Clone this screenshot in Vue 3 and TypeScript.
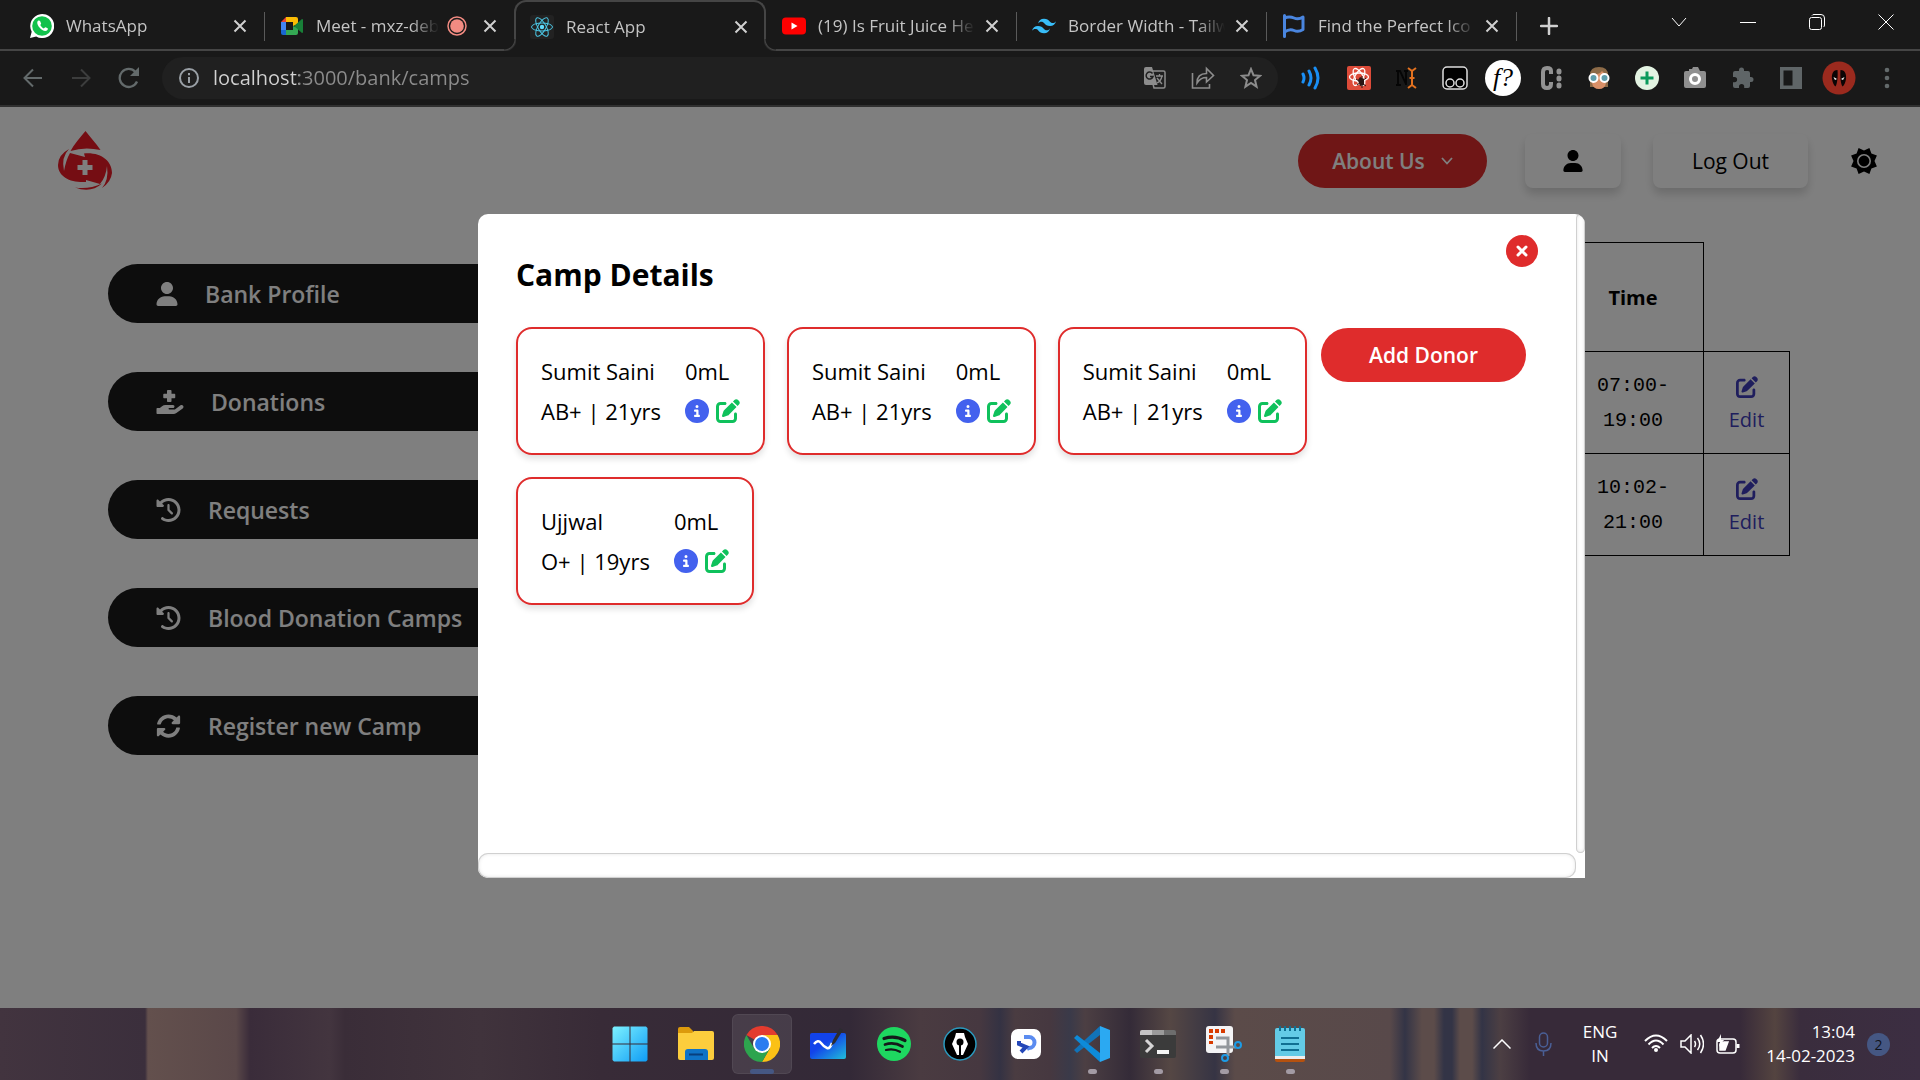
<script setup lang="ts">
interface Tab {
  title: string
  icon: string
  active?: boolean
  recording?: boolean
  divider?: boolean
}
interface Glyph {
  box: string
  width: number
  path: string
}
interface NavItem {
  label: string
  glyph: Glyph
}
interface Donor {
  name: string
  group: string
  age: number
  amount: string
}

const user: Glyph = {
  box: '0 0 448 512',
  width: 22,
  path: 'M224 256c70.7 0 128-57.3 128-128S294.7 0 224 0C153.3 0 96 57.3 96 128S153.3 256 224 256zM274.7 304H173.3C77.6 304 0 381.6 0 477.3c0 19.1 15.5 34.7 34.7 34.7h378.7C432.500 512 448 496.500 448 477.300C448 381.600 370.400 304 274.700 304z',
}
const hand: Glyph = {
  box: '0 0 576 512',
  width: 28,
  path: 'M568.2 336.3c-13.1-17.8-38.1-21.7-55.9-8.5l-119.7 88.2h-120.6c-8.7 0-16-7.2-16-16s7.2-16 16-16h78.2c16 0 30.7-10.9 33.4-26.6c3.2-20-12.1-37.4-31.6-37.4H192c-27 0-53.1 9.2-74.1 26.2L71.4 384H16c-8.7 0-16 7.3-16 16v96c0 8.800 7.300 16 16 16h346.100c22 0 43.900-7.200 61.700-20.300l135.100-99.500C577.500 379.100 581.300 354.100 568.200 336.300zM160 176h64v64c0 8.800 7.200 16 16 16h64c8.800 0 16-7.200 16-16v-64h64c8.800 0 16-7.200 16-16V96c0-8.800-7.200-16-16-16h-64V16c0-8.800-7.200-16-16-16h-64c-8.800 0-16 7.200-16 16v64h-64c-8.800 0-16 7.200-16 16v64C144 168.800 151.200 176 160 176z',
}
const history: Glyph = {
  box: '0 0 512 512',
  width: 25,
  path: 'M75 75L41 41C25.9 25.9 0 36.6 0 57.9V168c0 13.3 10.7 24 24 24H134.1c21.4 0 32.1-25.9 17-41l-30.8-30.8C155 85.5 203 64 256 64c106 0 192 86 192 192s-86 192-192 192c-40.8 0-78.6-12.7-109.7-34.4c-14.5-10.1-34.4-6.6-44.6 7.9s-6.6 34.4 7.9 44.6C151.2 495 201.7 512 256 512c141.4 0 256-114.6 256-256S397.4 0 256 0C185.3 0 121.3 28.7 75 75zm181 53c-13.3 0-24 10.7-24 24V256c0 6.4 2.5 12.5 7 17l72 72c9.4 9.4 24.6 9.4 33.9 0s9.4-24.6 0-33.9l-65-65V152c0-13.3-10.7-24-24-24z',
}
const sync: Glyph = {
  box: '0 0 512 512',
  width: 25,
  path: 'M370.7 133.3C339.5 104 298.9 88 255.8 88c-77.5.1-144.3 53.2-162.8 126.9-1.3 5.4-6.1 9.1-11.6 9.1H24.1c-7.5 0-13.2-6.8-11.8-14.2C33.9 94.9 134.8 8 256 8c66.4 0 126.8 26.1 171.3 68.7L463 41C478.1 25.9 504 36.6 504 57.9V192c0 13.3-10.7 24-24 24H345.900c-21.400 0-32.100-25.900-17-41l41.800-41.700zM32 296h134.100c21.400 0 32.100 25.900 17 41l-41.800 41.700c31.300 29.300 71.800 45.300 114.900 45.300 77.400-.1 144.300-53.100 162.800-126.800 1.300-5.400 6.100-9.200 11.600-9.200h57.300c7.500 0 13.200 6.800 11.800 14.200C478.100 417.100 377.200 504 256 504c-66.400 0-126.800-26.100-171.300-68.700L49 471C33.900 486.100 8 475.400 8 454.100V320c0-13.300 10.700-24 24-24z',
}
const pen =
  'M471.6 21.7c-21.9-21.9-57.3-21.9-79.2 0L362.3 51.7l97.9 97.9 30.1-30.1c21.9-21.9 21.9-57.3 0-79.2L471.6 21.7zm-299.2 220c-6.1 6.1-10.8 13.6-13.5 21.9l-29.6 88.8c-2.9 8.6-.6 18.1 5.8 24.6s15.9 8.7 24.6 5.8l88.8-29.6c8.2-2.7 15.7-7.4 21.9-13.5L437.7 172.3 339.7 74.3 172.4 241.7zM96 64C43 64 0 107 0 160V416c0 53 43 96 96 96H352c53 0 96-43 96-96V320c0-17.7-14.3-32-32-32s-32 14.3-32 32v96c0 17.7-14.3 32-32 32H96c-17.7 0-32-14.3-32-32V160c0-17.7 14.3-32 32-32h96c17.7 0 32-14.3 32-32s-14.3-32-32-32H96z'
const info =
  'M256 512A256 256 0 1 0 256 0a256 256 0 1 0 0 512zM216 336h24V272H216c-13.3 0-24-10.7-24-24s10.7-24 24-24h48c13.3 0 24 10.7 24 24v88h8c13.3 0 24 10.7 24 24s-10.7 24-24 24H216c-13.3 0-24-10.7-24-24s10.7-24 24-24zm40-208a32 32 0 1 1 0 64 32 32 0 1 1 0-64z'

const tabs: Tab[] = [
  { title: 'WhatsApp', icon: 'whatsapp', divider: true },
  { title: 'Meet - mxz-deb', icon: 'meet', recording: true },
  { title: 'React App', icon: 'react', active: true },
  { title: '(19) Is Fruit Juice He', icon: 'youtube', divider: true },
  { title: 'Border Width - Tailw', icon: 'tailwind', divider: true },
  { title: 'Find the Perfect Ico', icon: 'flag', divider: true },
]
const nav: NavItem[] = [
  { label: 'Bank Profile', glyph: user },
  { label: 'Donations', glyph: hand },
  { label: 'Requests', glyph: history },
  { label: 'Blood Donation Camps', glyph: history },
  { label: 'Register new Camp', glyph: sync },
]
const camps: [string, string][] = [
  ['07:00-', '19:00'],
  ['10:02-', '21:00'],
]
const donors: Donor[] = [
  { name: 'Sumit Saini', group: 'AB+', age: 21, amount: '0mL' },
  { name: 'Sumit Saini', group: 'AB+', age: 21, amount: '0mL' },
  { name: 'Sumit Saini', group: 'AB+', age: 21, amount: '0mL' },
  { name: 'Ujjwal', group: 'O+', age: 19, amount: '0mL' },
]
const address = 'localhost:3000/bank/camps'
</script>

<template>
  <div class="screen">
    <header class="tabs">
      <div v-for="tab in tabs" :key="tab.icon" class="tab" :class="{ active: tab.active, divider: tab.divider }">
        <svg v-if="tab.icon === 'whatsapp'" class="fav" viewBox="0 0 24 24">
          <path d="M0 24l1.7-6.2A12 12 0 1 1 6.2 22.4z" fill="#fff" />
          <circle cx="12" cy="12" r="9.8" fill="#12c24c" />
          <path d="M8.5 6.5c-2 1-1.500 4 1 7s6 4.500 8 2.500c.6-1 .4-1.500-.3-1.900l-1.700-.8c-.6-.2-.9.8-1.600 1.100-1.500-.4-3-1.900-3.600-3.400.1-.6 1-1 .8-1.600l-.9-2.200c-.3-.7-1.100-.9-1.700-.7z" fill="#fff" />
        </svg>
        <svg v-else-if="tab.icon === 'meet'" class="fav" viewBox="0 0 24 24">
          <path d="M1 8l5-5v5z" fill="#ea4335" />
          <path d="M6 3h10a2 2 0 0 1 2 2v5l-5 2V8H6z" fill="#fbbc04" />
          <path d="M1 8h5v8H1z" fill="#4285f4" />
          <path d="M1 16h5v5H3a2 2 0 0 1-2-2z" fill="#1967d2" />
          <path d="M6 16h7v-4l5 2v5a2 2 0 0 1-2 2H6z" fill="#34a853" />
          <path d="M14 12l8-7q1 0 1 1v12q0 1-1 1z" fill="#188038" />
        </svg>
        <svg v-else-if="tab.icon === 'react'" class="fav" viewBox="0 0 24 24">
          <rect width="24" height="24" rx="3" fill="#222" />
          <g fill="none" stroke="#4cc9e8" stroke-width="1">
            <ellipse cx="12" cy="12" rx="10.5" ry="4" />
            <ellipse cx="12" cy="12" rx="10.5" ry="4" transform="rotate(60 12 12)" />
            <ellipse cx="12" cy="12" rx="10.5" ry="4" transform="rotate(120 12 12)" />
          </g>
          <circle cx="12" cy="12" r="2.2" fill="#61dafb" />
        </svg>
        <svg v-else-if="tab.icon === 'youtube'" class="fav" viewBox="0 0 24 24">
          <rect y="3.5" width="24" height="17" rx="4" fill="#f00" />
          <path d="M9.5 8.5l6 3.5-6 3.5z" fill="#fff" />
        </svg>
        <svg v-else-if="tab.icon === 'tailwind'" class="fav" viewBox="0 0 24 24">
          <path d="M12 4.8c-3.2 0-5.2 1.6-6 4.8 1.2-1.6 2.6-2.2 4.2-1.8.9.2 1.6.9 2.3 1.7C13.7 10.7 15 12 18 12c3.2 0 5.2-1.6 6-4.8-1.2 1.6-2.6 2.2-4.2 1.8-.9-.2-1.6-.9-2.3-1.7C16.3 6.1 15 4.8 12 4.8zM6 12c-3.2 0-5.2 1.6-6 4.8 1.2-1.6 2.6-2.2 4.2-1.8.9.2 1.6.9 2.3 1.7 1.2 1.2 2.5 2.5 5.5 2.5 3.2 0 5.2-1.6 6-4.8-1.2 1.6-2.6 2.2-4.2 1.8-.9-.2-1.6-.9-2.3-1.7C10.3 13.3 9 12 6 12z" fill="#38bdf8" />
        </svg>
        <svg v-else class="fav" viewBox="0 0 24 24">
          <path d="M2.5 1.5v21M2.5 4q5-2 9.500 0t9-1v12.500q-4.500 3-9 1t-9.500 1.500" fill="none" stroke="#4a86e0" stroke-width="3" stroke-linecap="round" stroke-linejoin="round" />
        </svg>
        <span class="tab-title">{{ tab.title }}</span>
        <svg v-if="tab.recording" class="rec" viewBox="0 0 20 20">
          <circle cx="10" cy="10" r="9" fill="none" stroke="#f28b82" stroke-width="1.5" />
          <circle cx="10" cy="10" r="6.8" fill="#f28b82" />
        </svg>
        <button class="tab-close" aria-label="Close tab">
          <svg viewBox="0 0 14 14"><path d="M1.5 1.5l11 11M12.5 1.5l-11 11" /></svg>
        </button>
      </div>
      <button class="new-tab" aria-label="New tab">
        <svg width="18" height="18" viewBox="0 0 18 18"><path d="M9 1v16M1 9h16" stroke="#d0d0d0" stroke-width="2.5" stroke-linecap="round" /></svg>
      </button>
      <div class="window-controls">
        <button aria-label="Search tabs"><svg width="16" height="16" viewBox="0 0 16 16"><path d="M1 4l7 8 7-8" /></svg></button>
        <button aria-label="Minimize"><svg width="16" height="16" viewBox="0 0 16 16"><path d="M0 8.5h16" /></svg></button>
        <button aria-label="Restore"><svg width="16" height="16" viewBox="0 0 16 16"><rect x=".5" y="3.5" width="12" height="12" rx="2" /><path d="M3 1.500q.5-1 2-1h7q3.500 0 3.500 3.500v7q0 1.500-1 2" /></svg></button>
        <button aria-label="Close"><svg width="16" height="16" viewBox="0 0 16 16"><path d="M.5.5l15 15M15.5.5l-15 15" /></svg></button>
      </div>
    </header>

    <div class="toolbar">
      <button class="tool" aria-label="Back"><svg width="20" height="20" viewBox="0 0 20 20" fill="none" stroke="#636a6b" stroke-width="2"><path d="M19 10H2M10 1.5L1.5 10l8.5 8.5" /></svg></button>
      <button class="tool" aria-label="Forward"><svg width="20" height="20" viewBox="0 0 20 20" fill="none" stroke="#3c3d3d" stroke-width="2"><path d="M1 10h17M10 1.5l8.5 8.5-8.5 8.5" /></svg></button>
      <button class="tool" aria-label="Reload"><svg width="22" height="22" viewBox="0 0 22 22"><path d="M19 14.500A9 9 0 1 1 17.500 5" fill="none" stroke="#636a6b" stroke-width="2.300" /><path d="M21 0v9h-9z" fill="#636a6b" /></svg></button>
      <div class="address">
        <svg width="20" height="20" viewBox="0 0 20 20"><circle cx="10" cy="10" r="9" fill="none" stroke="#9aa0a6" stroke-width="2" /><path d="M10 9v6M10 5v2.2" stroke="#9aa0a6" stroke-width="2" /></svg>
        <input class="url" type="text" :value="address" aria-label="Address" />
        <button class="tool" aria-label="Translate">
          <svg width="22" height="22" viewBox="0 0 22 22"><path d="M8 4h11.5a1.5 1.5 0 0 1 1.5 1.5v14a1.5 1.5 0 0 1-1.5 1.5H10l-1-4" fill="none" stroke="#8c8c8c" stroke-width="1.5" /><path d="M2 0h6l5.5 18H2a2 2 0 0 1-2-2V2a2 2 0 0 1 2-2z" fill="#8c8c8c" /><path d="M8.5 6.5A3.5 3.5 0 1 0 9 9.5H6" fill="none" stroke="#202020" stroke-width="1.5" /><path d="M12 9h7M15.500 7v2M18 9q-1 5-5 7M13 11l5 6" stroke="#8c8c8c" stroke-width="1.300" fill="none" /></svg>
        </button>
        <button class="tool" aria-label="Share">
          <svg width="24" height="24" viewBox="0 0 24 24" fill="none" stroke="#8c8c8c" stroke-width="1.6"><path d="M1.5 7v15h17v-4" /><path d="M6 17C6 11 9 7.5 15.5 7.5V2.5l7 7-7 6.5v-4.5C11 11.5 8.5 13 6 17z" /></svg>
        </button>
        <button class="tool" aria-label="Bookmark">
          <svg width="22" height="22" viewBox="0 0 22 22"><path d="M11 2l2.500 6.200 6.500.600-5 4.300 1.600 6.600L11 16l-5.600 3.700L7 13.100 2 8.800l6.500-.6z" fill="none" stroke="#8c8c8c" stroke-width="2" /></svg>
        </button>
      </div>
      <div class="extensions">
        <button class="tool" aria-label="Audio extension"><svg width="24" height="24" viewBox="0 0 24 24" fill="none" stroke="#1a8ff5" stroke-width="3" stroke-linecap="round"><path d="M4 8q2 4 0 8M10 5q4 7 0 14M16 2q6 10 0 20" /></svg></button>
        <button class="tool" aria-label="React tools"><svg width="24" height="24" viewBox="0 0 24 24"><rect width="24" height="24" rx="2" fill="#dd4b39" /><g fill="none" stroke="#fff" stroke-width="1.3"><ellipse cx="12" cy="11" rx="9.5" ry="4" /><ellipse cx="12" cy="11" rx="9.5" ry="4" transform="rotate(60 12 11)" /><ellipse cx="12" cy="11" rx="9.5" ry="4" transform="rotate(120 12 11)" /></g><path d="M11 14l2-3 4 2v6l-4 1z" fill="#2b1512" /><path d="M9 13l10 7M10 19l9-7M15 10v12" stroke="#2b1512" stroke-width="1" /></svg></button>
        <button class="tool" aria-label="Text tool"><svg width="24" height="24" viewBox="0 0 24 24"><path d="M1 5h4l6 13M3 5v14M1 19h5M11 19V5M9 5h4" stroke="#050505" stroke-width="1.8" fill="none" /><path d="M13 2l4 3 4-3M17 5v15M13 22l4-3 4 3M14.5 12h5" fill="none" stroke="#e2711f" stroke-width="2" /></svg></button>
        <button class="tool" aria-label="Scripts"><svg width="26" height="24" viewBox="0 0 26 24"><rect x="1" y="1" width="24" height="22" rx="4" fill="#000" stroke="#ddd" stroke-width="1.5" /><circle cx="8" cy="17" r="4" fill="none" stroke="#ddd" stroke-width="1.5" /><circle cx="18" cy="17" r="4" fill="none" stroke="#ddd" stroke-width="1.5" /></svg></button>
        <button class="tool font-tool" aria-label="What font"><i>f?</i></button>
        <button class="tool" aria-label="Code tool"><svg width="24" height="24" viewBox="0 0 24 24" fill="none" stroke="#929292"><path d="M12 8V5q0-3-4-3T4 6v12q0 4 4 4t4-4v-2" stroke-width="4" /><path d="M20 5v1M20 12v1M20 19v1" stroke-width="5" stroke-linecap="round" /></svg></button>
        <button class="tool" aria-label="Avatar extension"><svg width="24" height="24" viewBox="0 0 24 24"><path d="M3 21V9Q3 1 12 1t9 8v12z" fill="#8d6b48" /><path d="M5 8q7 1 10-3l4 4v8q-1 6-7 6t-7-6z" fill="#d99068" /><circle cx="6.5" cy="12" r="4" fill="#5f9dab" stroke="#fff" stroke-width="2" /><circle cx="17.5" cy="12" r="4" fill="#5f9dab" stroke="#fff" stroke-width="2" /></svg></button>
        <button class="tool" aria-label="Add extension"><svg width="24" height="24" viewBox="0 0 24 24"><circle cx="12" cy="12" r="12" fill="#e3f3e2" /><path d="M12 5.5v13M5.5 12h13" stroke="#0a9a5b" stroke-width="3" /></svg></button>
        <button class="tool" aria-label="Screenshot"><svg width="24" height="24" viewBox="0 0 24 24"><path d="M3 5h3V3h3l1-2h5l2 4h4a2 2 0 0 1 2 2v13a2 2 0 0 1-2 2H3a2 2 0 0 1-2-2V7a2 2 0 0 1 2-2z" fill="#8f8f8f" /><circle cx="12" cy="13" r="4.5" fill="#8f8f8f" stroke="#fff" stroke-width="3" /></svg></button>
        <button class="tool" aria-label="Extensions"><svg width="24" height="24" viewBox="0 0 24 24"><path d="M20 11h-1V7a2 2 0 0 0-2-2h-4V4a2.5 2.5 0 0 0-5 0v1H4a2 2 0 0 0-2 2v4h1.5a2.6 2.6 0 0 1 0 5.2H2V20a2 2 0 0 0 2 2h4v-1.5a2.6 2.6 0 0 1 5.2 0V22H17a2 2 0 0 0 2-2v-4h1a2.5 2.5 0 0 0 0-5z" fill="#5f6567" /></svg></button>
        <button class="tool" aria-label="Side panel"><svg width="24" height="24" viewBox="0 0 24 24"><path d="M1 1h22v22H1zM4.5 4.5v15h9v-15z" fill="#5f6567" fill-rule="evenodd" /></svg></button>
        <button class="tool" aria-label="Profile"><svg width="34" height="34" viewBox="0 0 34 34"><circle cx="17" cy="17" r="16.5" fill="#9b2a1e" /><path d="M15.500 9c-5 0-6 5-5.500 9 .5 3.500 2 6.500 3.500 7.500 2-3 2.500-11 2-16.500zM18.500 9c5 0 6 5 5.500 9-.5 3.500-2 6.500-3.500 7.500-2-3-2.500-11-2-16.500z" fill="#0b0505" /><path d="M11.500 16l3.500 2-2 1zM22.500 16L19 18l2 1z" fill="#fff" /></svg></button>
        <button class="tool" aria-label="Menu"><svg width="6" height="22" viewBox="0 0 6 22" fill="#636a6b"><circle cx="3" cy="3" r="2.3" /><circle cx="3" cy="11" r="2.3" /><circle cx="3" cy="19" r="2.3" /></svg></button>
      </div>
    </div>

    <main class="page">
      <div class="top">
        <svg class="logo" width="54" height="60" viewBox="0 0 54 60">
          <path d="M27.5 0C22 7 16 13 12.5 20q14-4.500 30-1C38 12 32 6 27.500 0z" fill="#ea1b26" />
          <path d="M12 22l15 4-1-3.500C43 21 54 30 54 42q-1 9-10 15 7-8 5-22-1 11-7 18l-14-4v2C13 52 0 46 0 34q0-10 11-16Q3 26 6 40q2-11 6-18z" fill="#ea1b26" />
          <path d="M17 56.5q14 2 27-4-11 10-27 4z" fill="#ea1b26" />
          <path d="M24.5 29h5v5h5v5h-5v5h-5v-5h-5v-5h5z" fill="#fff" />
        </svg>
        <button class="about">About Us<svg width="12" height="8" viewBox="0 0 12 8"><path d="M1 1l5 5.5L11 1" fill="none" stroke="#fff" stroke-width="1.8" /></svg></button>
        <button class="profile" aria-label="Profile"><svg width="20" height="22" :viewBox="user.box"><path :d="user.path" /></svg></button>
        <button class="logout">Log Out</button>
        <button class="theme" aria-label="Toggle theme">
          <svg width="28" height="28" viewBox="0 0 28 28">
            <path d="M19.4 1.1l2 5.5 5.5 2-2.4 5.4 2.4 5.4-5.5 2-2 5.500-5.400-2.400-5.400 2.400-2-5.500-5.500-2 2.400-5.400-2.400-5.400 5.500-2 2-5.500 5.400 2.400z" />
            <circle cx="14" cy="14" r="6.2" fill="none" stroke="#fff" stroke-width="1.6" />
          </svg>
        </button>
      </div>

      <div class="body">
        <nav class="side">
          <a v-for="item in nav" :key="item.label" href="#">
            <svg :width="item.glyph.width" height="24" :viewBox="item.glyph.box"><path :d="item.glyph.path" /></svg>
            {{ item.label }}
          </a>
        </nav>
        <table class="camps">
          <thead>
            <tr><th>Time</th></tr>
          </thead>
          <tbody>
            <tr v-for="camp in camps" :key="camp[0]">
              <td class="time">{{ camp[0] }}<br />{{ camp[1] }}</td>
              <td class="edit">
                <a href="#"><svg width="22" height="22" viewBox="0 0 512 512"><path :d="pen" /></svg>Edit</a>
              </td>
            </tr>
          </tbody>
        </table>
      </div>

      <div class="overlay">
        <section class="modal" role="dialog" aria-labelledby="camp-title">
          <div class="content">
            <div class="title-row">
              <h1 id="camp-title">Camp Details</h1>
              <button class="dismiss" aria-label="Close"><svg width="12" height="12" viewBox="0 0 12 12"><path d="M2 2l8 8M10 2l-8 8" stroke="#fff" stroke-width="3" stroke-linecap="round" /></svg></button>
            </div>
            <div class="donor-area">
              <div class="donors">
                <article v-for="(donor, i) in donors" :key="i" class="donor">
                  <span>{{ donor.name }}</span>
                  <span>{{ donor.amount }}</span>
                  <span>{{ donor.group }} | {{ donor.age }}yrs</span>
                  <span class="actions">
                    <button aria-label="Donor info"><svg width="24" height="24" viewBox="0 0 512 512"><path :d="info" fill="#4361ee" /></svg></button>
                    <button aria-label="Edit donor"><svg width="24" height="24" viewBox="0 0 512 512"><path :d="pen" fill="#0fc15c" /></svg></button>
                  </span>
                </article>
              </div>
              <button class="add">Add Donor</button>
            </div>
          </div>
          <div class="v-bar"></div>
          <div class="h-bar"></div>
        </section>
      </div>
    </main>

    <footer class="taskbar">
      <div class="apps">
        <button aria-label="Start"><svg width="36" height="36" viewBox="0 0 36 36"><defs><linearGradient id="win" x2="1" y2="1"><stop stop-color="#7df2ff" /><stop offset="1" stop-color="#0f9cf5" /></linearGradient></defs><path d="M2 .5h15.500v17H.500V2zM18.500.500H34l1.500 1.500v15.500h-17zM.500 18.500h17v17H2L.500 34zM18.500 18.500h17V34L34 35.500H18.500z" fill="url(#win)" /></svg></button>
        <button aria-label="File Explorer"><svg width="36" height="34" viewBox="0 0 36 34"><path d="M0 2q0-2 2-2h9l4 4v6H0z" fill="#dc9a0c" /><path d="M0 6h14l2-2h18q2 0 2 2v25q0 2-2 2H2q-2 0-2-2z" fill="#fccd3d" /><path d="M7 33v-8q0-3 3-3h17q3 0 3 3v8z" fill="#0f73c6" /><path d="M11 27.5h14" stroke="#083f7d" stroke-width="2" /></svg></button>
        <button class="current" aria-label="Chrome"><svg width="36" height="36" viewBox="0 0 36 36"><path d="M18 18L2.400 9A18 18 0 0 1 33.600 9H18z" fill="#e33b2e" /><path d="M18 9h15.600A18 18 0 0 1 18 36l7.800-13.500z" fill="#fbc116" /><path d="M10.200 22.500L2.400 9A18 18 0 0 0 18 36l7.800-13.500z" fill="#2da44e" /><circle cx="18" cy="18" r="9" fill="#fff" /><circle cx="18" cy="18" r="7" fill="#2a7cf0" /></svg></button>
        <button aria-label="Whiteboard"><svg width="36" height="32" viewBox="0 0 36 32"><defs><linearGradient id="board" x2="1" y2="1"><stop offset=".4" stop-color="#1243ea" /><stop offset="1" stop-color="#21bfd9" /></linearGradient></defs><rect y="5" width="36" height="26" rx="2" fill="url(#board)" /><path d="M4 16q4-5 7-1t6 5 5-5" fill="none" stroke="#fff" stroke-width="2.5" /><path d="M21 18l2-6L30 0l3 2-8 13z" fill="#2c2c30" /></svg></button>
        <button aria-label="Spotify"><svg width="34" height="34" viewBox="0 0 34 34"><circle cx="17" cy="17" r="17" fill="#1ed760" /><g fill="none" stroke="#14191a" stroke-linecap="round"><path d="M7 11.5q11-3.500 21 2" stroke-width="3.200" /><path d="M8 17.500q9-3 17.500 2" stroke-width="2.700" /><path d="M9 23q7.500-2 14 1.800" stroke-width="2.200" /></g></svg></button>
        <button aria-label="Pen app"><svg width="34" height="34" viewBox="0 0 34 34"><circle cx="17" cy="17" r="16" fill="#000" stroke="#2a9abf" stroke-width="1.5" /><path d="M13 6h8l1 4 3 7-5 11h-6L9 17l3-7z" fill="#fff" /><circle cx="17" cy="15" r="3.5" fill="#000" /><path d="M17 14v14" stroke="#000" stroke-width="2" /></svg></button>
        <button aria-label="Planner"><svg width="30" height="30" viewBox="0 0 30 30"><rect width="30" height="30" rx="7" fill="#fff" /><path d="M13 8h5a5 5 0 0 1 0 11l-2 1" fill="none" stroke="#5b8cf0" stroke-width="4" /><path d="M8 12v3l7 3-5 5" stroke="#2447b8" stroke-width="4" fill="none" /></svg></button>
        <button class="open" aria-label="Visual Studio Code"><svg width="36" height="36" viewBox="0 0 36 36"><path d="M26 0v9L3 27l-3-3z" fill="#1173b8" /><path d="M3 9l23 18v9L0 12z" fill="#0d8bd9" /><path d="M26 0l10 4v28l-10 4z" fill="#2ba9f2" /></svg></button>
        <button class="open" aria-label="Terminal"><svg width="36" height="28" viewBox="0 0 36 28"><rect width="36" height="28" rx="2" fill="#3b3b3b" /><path d="M0 5V2q0-2 2-2h10v5z" fill="#c4c4c4" /><path d="M12 0h12v5H12z" fill="#9a9a9a" /><path d="M24 0h10q2 0 2 2v3H24z" fill="#6d6d6d" /><path d="M6 10l6 6-6 6" fill="none" stroke="#d5d5d5" stroke-width="3" /><path d="M17 20h12v4H17z" fill="#f5f5f5" /></svg></button>
        <button class="open" aria-label="Snipping Tool"><svg width="36" height="36" viewBox="0 0 36 36"><rect width="27" height="27" rx="3" fill="#f4f4f6" /><path d="M3 5h18M5 3v15" fill="none" stroke="#d83b01" stroke-width="4" stroke-dasharray="4 2" /><path d="M10 12h12v18M10 21h20" fill="none" stroke="#93979c" stroke-width="3" /><circle cx="19" cy="32" r="3" fill="none" stroke="#1c9be6" stroke-width="2" /><circle cx="32" cy="19" r="3" fill="none" stroke="#1c9be6" stroke-width="2" /></svg></button>
        <button class="open" aria-label="Notepad"><svg width="30" height="36" viewBox="0 0 30 36"><rect y="2" width="30" height="30" rx="2" fill="#63cbe6" /><path d="M0 30h30v3H0z" fill="#eee" /><path d="M0 33h30v1q0 2-2 2H2q-2 0-2-2z" fill="#b5510f" /><path d="M5 0v5M10 0v5M15 0v5M20 0v5M25 0v5M6 12h18M6 18h18M6 24h18" stroke="#0f6f92" stroke-width="2" /></svg></button>
      </div>
      <div class="tray">
        <svg width="18" height="10" viewBox="0 0 18 10"><path d="M.5 9.5L9 1l8.5 8.5" /></svg>
        <svg class="mic" width="17" height="24" viewBox="0 0 17 24"><rect x="4.5" y="1" width="8" height="14" rx="4" /><path d="M1 11q0 8 7.500 8t7.500-8M8.500 19v5" /></svg>
        <div class="lang">ENG<br />IN</div>
        <div class="status">
          <svg width="24" height="18" viewBox="0 0 24 18"><path d="M1 7q11-11 22 0M4.500 10.500q7.500-8 15 0M8 14q4-4 8 0" stroke-width="2" /><circle cx="12" cy="16" r="2" fill="#fff" stroke="none" /></svg>
          <svg width="24" height="20" viewBox="0 0 24 20"><path d="M1 7h4l6-6v18l-6-6H1zM14.500 7q2 3 0 6M17.500 4q4.500 6 0 12M20.500 1q6 9 0 18" /></svg>
          <svg width="24" height="20" viewBox="0 0 24 20"><rect x="1" y="5" width="19" height="14" rx="3" /><path d="M4 16V10l4-2h4l-3 8z" fill="#fff" /><path d="M5 0L1 8h3l-1 5 5-7H5z" fill="#fff" stroke="none" /><path d="M22 10v4" stroke-width="3" /></svg>
        </div>
        <div class="clock">13:04<br />14-02-2023</div>
        <div class="badge">2</div>
      </div>
    </footer>
  </div>
</template>

<style>
body {
  margin: 0;
}
</style>

<style scoped>
.screen {
  display: flex;
  flex-direction: column;
  min-height: 100vh;
  font-family: 'Open Sans', 'Noto Sans', sans-serif;
  background: #808080;
}
.screen * {
  box-sizing: border-box;
}
button {
  display: flex;
  align-items: center;
  justify-content: center;
  padding: 0;
  border: 0;
  background: none;
  font-family: inherit;
  color: inherit;
}
svg {
  display: block;
  flex: none;
}

/* tab strip */
.tabs {
  display: flex;
  height: 51px;
  padding-left: 14px;
  background: #191919;
  box-shadow: inset 0 -2px #454545;
}
.tab {
  position: relative;
  display: flex;
  flex: 0 1 250px;
  align-items: center;
  min-width: 0;
  padding: 0 17px 0 16px;
}
.tab.divider::before {
  content: '';
  position: absolute;
  right: -1px;
  top: 12px;
  width: 1px;
  height: 29px;
  background: #5a5a5a;
}
.tab.active {
  flex-basis: 252px;
  padding: 0 16px 0 14px;
  border: 2px solid #454545;
  border-bottom: 0;
  border-radius: 12px 12px 0 0;
  background: #191919;
}
.tab.active::before,
.tab.active::after {
  content: '';
  position: absolute;
  bottom: 0;
  width: 12px;
  height: 12px;
}
.tab.active::before {
  left: -12px;
  background: radial-gradient(circle at 0 0, #191919 10px, #454545 11px, #454545 11px, #191919 13px);
}
.tab.active::after {
  right: -12px;
  background: radial-gradient(circle at 100% 0, #191919 10px, #454545 11px, #454545 11px, #191919 13px);
}
.fav {
  width: 24px;
  height: 24px;
  margin-right: 12px;
}
.tab-title {
  flex: 1;
  overflow: hidden;
  white-space: nowrap;
  font-size: 17px;
  line-height: 24px;
  color: #c4c4c4;
  mask-image: linear-gradient(to right, #000 calc(100% - 28px), transparent);
}
.rec {
  width: 20px;
  height: 20px;
  margin: 0 6px 0 8px;
}
.tab-close {
  width: 14px;
  height: 14px;
  margin-left: 10px;
}
.tab-close svg {
  width: 14px;
  height: 14px;
  stroke: #d0d0d0;
  stroke-width: 2;
}
.new-tab {
  width: 66px;
}
.window-controls {
  display: flex;
  height: 43px;
  margin-left: auto;
}
.window-controls button {
  width: 69px;
}
.window-controls svg {
  fill: none;
  stroke: #fff;
}

/* toolbar */
.toolbar {
  display: flex;
  align-items: center;
  height: 56px;
  padding: 0 9px;
  border-bottom: 2px solid #303030;
  background: #191919;
}
.tool {
  width: 48px;
  height: 42px;
  flex: none;
}
.address {
  display: flex;
  flex: 1;
  align-items: center;
  min-width: 0;
  height: 42px;
  margin-left: 9px;
  padding: 0 3px 0 17px;
  border-radius: 21px;
  background: #202020;
}
.url {
  flex: 1;
  min-width: 0;
  margin-left: 14px;
  padding: 0;
  border: 0;
  outline: 0;
  font-family: inherit;
  font-size: 20px;
  line-height: 30px;
  color: transparent;
  background: linear-gradient(to right, #d2d2d2 86px, #8c8c8c 86px) text;
}
.extensions {
  display: flex;
  margin-left: 9px;
}
.font-tool i {
  width: 36px;
  border-radius: 18px;
  background: #fff;
  color: #000;
  font: italic 26px/36px 'Liberation Serif', serif;
}

/* page */
.page {
  position: relative;
  flex: 1;
  background: #fff;
}
.top {
  display: flex;
  align-items: center;
  height: 108px;
  padding: 0 42px 0 58px;
}
.logo {
  margin-right: auto;
}
.top button {
  height: 54px;
  border-radius: 8px;
  font-size: 21px;
  line-height: 28px;
}
.top .about {
  gap: 16px;
  width: 189px;
  border-radius: 27px;
  background: #df2c2c;
  color: #fff;
  font-weight: 600;
}
.top .profile,
.top .logout {
  box-shadow: 0 6px 10px rgba(0, 0, 0, 0.16);
}
.profile {
  width: 96px;
  margin-left: 38px;
}
.logout {
  width: 155px;
  margin-left: 32px;
  font-weight: 500;
}
.theme {
  margin-left: 42px;
}
.body {
  display: flex;
  align-items: flex-start;
  justify-content: space-between;
  padding: 27px 130px 0 108px;
}
.side {
  display: flex;
  flex-direction: column;
  gap: 49px;
  width: 420px;
  padding-top: 22px;
}
.side a {
  display: flex;
  align-items: center;
  gap: 27px;
  height: 59px;
  padding-left: 48px;
  border-radius: 30px;
  background: #1a1a1a;
  color: #fff;
  font-size: 23px;
  font-weight: 600;
  line-height: 32px;
  text-decoration: none;
  white-space: nowrap;
}
.side svg {
  fill: #fff;
}
.camps {
  border-collapse: collapse;
  font-size: 20px;
  line-height: 35px;
  text-align: center;
}
.camps th,
.camps td {
  padding: 0;
  border: 1px solid #000;
}
.camps th {
  height: 109px;
}
.camps td {
  height: 102px;
}
.camps .time {
  width: 141px;
  font-family: 'Liberation Mono', monospace;
}
.camps .edit {
  width: 86px;
}
.edit a {
  display: flex;
  flex-direction: column;
  align-items: center;
  gap: 4px;
  color: #3f3cbb;
  text-decoration: none;
}
.edit svg {
  margin-top: 7px;
  fill: #3f3cbb;
}

/* modal */
.overlay {
  position: absolute;
  inset: 0;
  display: flex;
  padding: 107px 335px 130px 478px;
  background: rgba(0, 0, 0, 0.5);
}
.modal {
  display: grid;
  flex: 1;
  grid-template: 1fr 25px / 1fr 9px;
  min-width: 0;
  border-radius: 10px 10px 0 10px;
  background: #fff;
  overflow: hidden;
}
.content {
  padding: 21px 38px 0;
  min-width: 0;
}
.title-row {
  display: flex;
  justify-content: space-between;
}
h1 {
  margin: 18px 0 0;
  font-size: 30px;
  line-height: 44px;
}
.dismiss {
  width: 32px;
  height: 32px;
  border-radius: 16px;
  background: #df2c2c;
}
.v-bar,
.h-bar {
  border-radius: 10px;
  box-shadow: inset 0 0 0 1px #d0d0d0, inset 0 0 4px #d8d8d8;
}
.donor-area {
  display: flex;
  align-items: flex-start;
  justify-content: space-between;
  margin-top: 30px;
}
.donors {
  display: flex;
  flex: 0 1 803px;
  flex-wrap: wrap;
  gap: 22px;
}
.donor {
  display: grid;
  grid-template-columns: auto auto;
  column-gap: 24px;
  align-items: center;
  padding: 22px 23px;
  border: 2px solid #df2c2c;
  border-radius: 16px;
  box-shadow: 0 4px 6px rgba(0, 0, 0, 0.12);
  font-size: 22px;
  line-height: 40px;
  white-space: nowrap;
}
.actions {
  display: flex;
  gap: 7px;
}
.add {
  width: 205px;
  height: 54px;
  margin: 1px 12px 0 0;
  border-radius: 27px;
  background: #df2c2c;
  color: #fff;
  font-size: 21px;
  font-weight: 600;
}

/* taskbar */
.taskbar {
  display: grid;
  grid-template-columns: 1fr auto 1fr;
  height: 72px;
  background: linear-gradient(to right, #42343f 0, #3b2f3c 145px, #63504d 148px, #5a4849 236px, #3a2c3a 250px, #43353f 330px, #3a2d38 345px, #40333c 480px, #382b37 600px, #332937 850px, #4a3b41 920px, #463840 980px, #343243 1000px, #4a3c41 1015px, #463840 1050px, #3a3a49 1070px, #4c3f43 1085px, #342b38 1130px, #554744 1170px, #363444 1215px, #5b4b49 1235px, #58494a 1390px, #333446 1405px, #5c4c4a 1422px, #5c4c4a 1434px, #333446 1444px, #333446 1452px, #5c4c4a 1460px, #5c4c4a 1472px, #333446 1482px, #4c3f43 1500px, #372a39 1530px, #372a39 1740px, #544440 1775px, #3a2d3d 1800px, #3c2e42 1920px);
  color: #fff;
}
.apps {
  grid-column: 2;
  display: flex;
  align-items: center;
  gap: 6px;
}
.apps button {
  position: relative;
  width: 60px;
  height: 60px;
  border-radius: 6px;
}
.apps .current {
  background: rgba(255, 255, 255, 0.09);
  box-shadow: inset 0 0 0 1px rgba(255, 255, 255, 0.06);
}
.apps .current::after,
.apps .open::after {
  content: '';
  position: absolute;
  bottom: 0;
  width: 9px;
  height: 5px;
  border-radius: 3px;
  background: #a39ba4;
}
.apps .current::after {
  width: 24px;
  background: #455783;
}
.tray {
  display: flex;
  align-items: center;
  justify-content: flex-end;
  padding-right: 30px;
  font-size: 17px;
  line-height: 24px;
  white-space: nowrap;
}
.tray svg {
  fill: none;
  stroke: #fff;
  stroke-width: 1.5;
}
.tray .mic {
  margin-left: 24px;
  stroke: #4a5f96;
}
.lang {
  margin-left: 31px;
  text-align: center;
}
.status {
  display: flex;
  gap: 12px;
  margin: 0 26px 0 27px;
}
.clock {
  text-align: right;
}
.badge {
  width: 23px;
  margin-left: 12px;
  border-radius: 12px;
  background: #455783;
  color: #10131c;
  font-size: 14px;
  line-height: 23px;
  text-align: center;
}
</style>
